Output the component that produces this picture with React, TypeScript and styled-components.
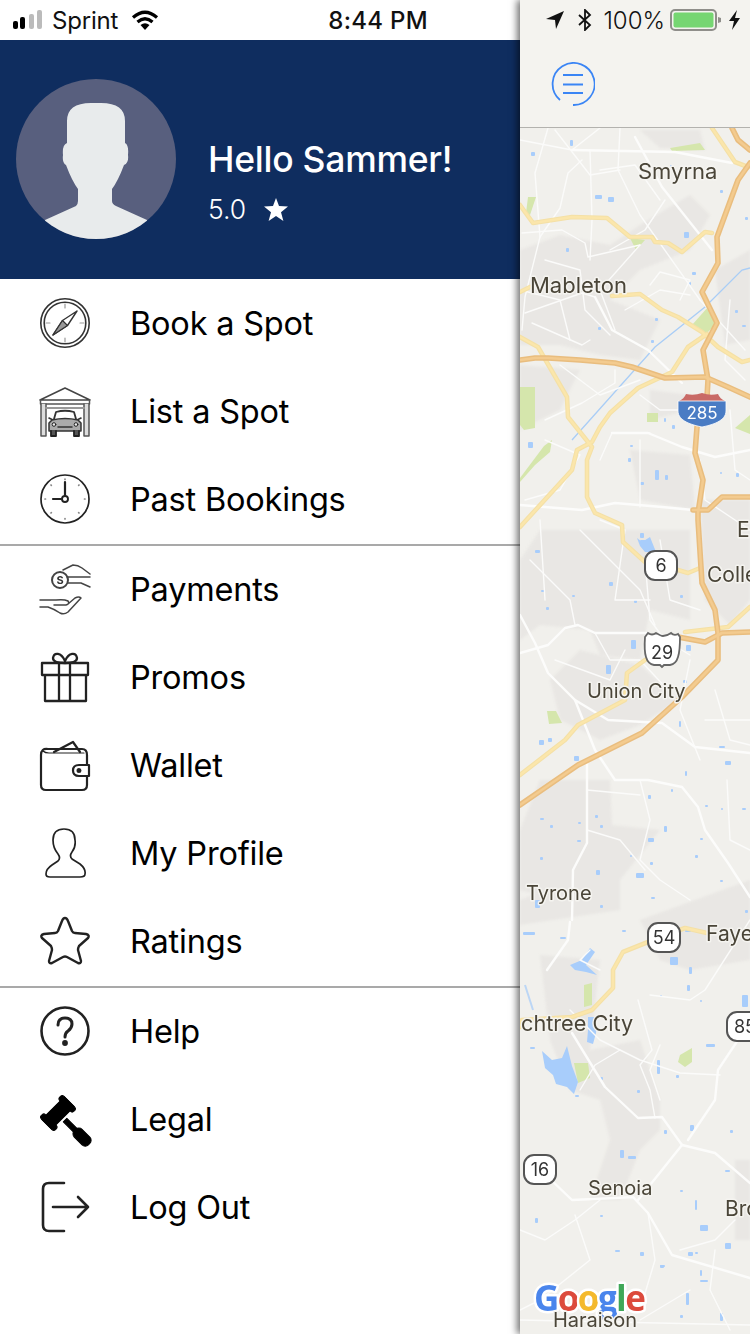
import React from "react";
import styled, { createGlobalStyle } from "styled-components";

const Global = createGlobalStyle`
  html, body { margin: 0; padding: 0; background: #fff; }
  body { font-family: Inter, "Liberation Sans", sans-serif; }
`;
const Screen = styled.div`
  width: 750px; height: 1334px; display: flex; overflow: hidden; position: relative; color: #000;
`;
const Drawer = styled.aside`
  width: 520px; flex: none; display: flex; flex-direction: column; background: #fff;
`;
const StatusBar = styled.div`
  height: 40px; flex: none; display: flex; align-items: center; font-size: 24px; color: #111;
`;
const DrawerStatus = styled(StatusBar)`
  padding-left: 13px;
`;
const Carrier = styled.span`
  margin-left: 6px; width: 65px; letter-spacing: -0.2px;
`;
const Clock = styled.span`
  font-weight: 500; margin-left: auto; margin-right: 92px; letter-spacing: 0.3px;
`;
const Header = styled.header`
  height: 239px; flex: none; background: #0f2d5f; display: flex; align-items: flex-start; padding: 39px 0 0 16px; box-sizing: border-box; color: #fff;
`;
const Avatar = styled.svg`
  width: 160px; height: 160px; flex: none;
`;
const Greeting = styled.div`
  margin: 60px 0 0 32px; display: flex; flex-direction: column; gap: 12px;
`;
const Name = styled.div`
  font-size: 35.5px; font-weight: 500; line-height: 42px; letter-spacing: -0.25px;
`;
const RatingRow = styled.div`
  display: flex; align-items: center; gap: 18px; font-size: 26.5px; line-height: 32px; font-weight: 300;
`;
const Row = styled.div`
  height: 88px; display: flex; align-items: center; padding-left: 40px; gap: 41px; font-size: 32.5px; letter-spacing: -0.2px;
  & > span { margin-left: -1px; }
`;
const IconBox = styled.svg<{ $w?: number }>`
  width: 50px; height: 50px; flex: none; overflow: visible; fill: none; stroke: #222; stroke-width: ${(p) => p.$w ?? 2}; stroke-linecap: round; stroke-linejoin: round; filter: blur(0.35px);
`;
const Divider = styled.hr`
  margin: 1px 0 -1px; border: 0; height: 2px; background: #a9a9a9; flex: none;
`;
const MapPanel = styled.main`
  flex: 1; display: flex; flex-direction: column; position: relative; z-index: 1; box-shadow: -3px 0 7px rgba(0,0,0,.55); background: #f4f3ef;
`;
const PanelStatus = styled(StatusBar)`
  justify-content: flex-end; padding-right: 9px; color: #111;
`;
const Percent = styled.span`
  margin: 0 5px 0 10px; font-weight: 300;
`;
const Toolbar = styled.div`
  height: 88px; flex: none; display: flex; align-items: center; padding-left: 31px; border-bottom: 1px solid #b3b2ae; box-sizing: border-box;
`;
const MapCanvas = styled.svg`
  display: block; width: 230px; height: 1206px; flex: none; background: #f1f0ec; filter: blur(0.45px);
`;
const Blocks = styled.g`
  filter: blur(1.2px);
`;
const CityLabel = styled.text<{ $s?: number }>`
  font-family: Inter, sans-serif; font-size: ${(p) => p.$s ?? 21}px; fill: #4a4538; stroke: #f5f4f0; stroke-width: 3px; paint-order: stroke; stroke-linejoin: round;
`;
const ShieldLabel = styled.text`
  font-family: Inter, sans-serif; font-size: 18px; fill: #333; text-anchor: middle;
`;
const LogoLabel = styled.text`
  font-family: "Open Sans", sans-serif; font-size: 35px; font-weight: 700; stroke: #fff; stroke-width: 5px; paint-order: stroke; stroke-linejoin: round; letter-spacing: -1.6px;
`;

const orange = [
  "520,360 535,358 548,358 580,360 615,363 632,367 665,378 705,377 728,387 750,397",
  "732,128 738,140 750,150",
  "750,163 738,180 717,237 718,263 702,292 717,323 703,350 708,380 707,397 697,427 695,453 703,480 698,513 698,520 702,583 715,610 718,633 718,660 682,697 642,733 578,765 520,805",
  "693,510 708,510 722,497 750,497",
  "678,637 705,642 722,633 750,632",
];
const yellow = [
  "520,205 533,223 572,217 607,218 630,237 652,237 655,242 668,243 682,252 705,232 712,233",
  "712,128 735,162 748,167",
  "520,292 530,287",
  "612,296 640,294 662,310 678,317 702,332 718,347 742,362 750,360",
  "520,337 538,347 567,397 568,417 592,447 587,460 587,497 595,513 622,525 623,542 645,562 678,570 688,573 700,568",
  "520,527 572,470 577,450 592,442 600,427 610,413 638,388 672,372 688,347 707,334",
  "520,775 565,740 578,725 625,700 627,673 645,660",
  "685,632 728,627 750,607",
  "520,1027 522,1020 572,1017 592,1010 613,988 613,970 623,952 648,942 685,928 707,933",
];
const whiteMajor = [
  "520,653 548,645 565,628 578,625 595,633 648,633",
  "520,615 535,643 548,673 575,700 595,750 615,780 648,780 682,787 698,807 705,830 728,863 750,897",
  "575,700 608,720 662,723 695,747 750,753",
  "587,760 587,843 573,870 572,920",
  "548,1177 572,1200 615,1198 633,1197 648,1213 672,1255 750,1278",
  "638,1200 682,1145 715,1153 750,1183",
  "682,1145 662,1117 638,1118 605,1087 572,1033",
  "688,1140 715,1100 718,1070 738,1040",
  "572,150 675,152 732,163",
  "635,137 662,187 712,250",
  "547,970 568,940 570,922",
  "595,297 612,330 648,350 682,383",
  "520,505 582,510 615,503 662,507 693,510",
  "612,433 648,433 682,447 715,457 750,450",
];
const whiteMinor = [
  "548,128 535,173 540,237 525,297 522,330",
  "582,160 568,173 560,208 540,237",
  "522,233 562,230 585,243 588,257 640,245",
  "525,313 582,293 595,297",
  "532,323 582,345 590,340",
  "615,370 615,383 582,403 545,420",
  "640,245 600,290 615,330",
  "520,140 572,150 600,128",
  "620,128 618,170 640,215 700,300",
  "610,250 645,230 665,200",
  "650,285 660,272 690,280 680,300",
  "700,300 745,350",
  "730,300 725,360 745,380",
  "600,460 612,433 650,433",
  "640,507 640,440",
  "700,460 705,500 735,520 750,530",
  "645,560 650,620 665,640 690,655",
  "580,530 610,560 640,590 655,625",
  "530,560 570,600 575,625",
  "595,633 610,660 640,660 668,690",
  "690,660 680,710 700,760",
  "640,780 650,820 640,860 660,880 690,900",
  "587,790 640,795",
  "587,830 620,840 645,870",
  "705,720 750,720",
  "727,780 730,840 750,850",
  "590,950 580,960 600,970",
  "570,1010 600,1040 640,1060 680,1073 720,1075",
  "638,1000 652,1050 640,1065 650,1090 655,1118",
  "620,1050 595,1065 580,1090",
  "650,995 690,1000 705,990 750,920",
  "660,1045 650,1070 660,1100",
  "520,1230 545,1240 575,1220 600,1200",
  "575,1215 590,1260 540,1300 520,1310",
  "648,1213 655,1260 640,1310",
  "715,1250 710,1290 730,1330",
  "520,1320 750,1325",
  "690,1290 640,1320",
  "735,1220 715,1240 680,1250",
  "555,130 590,175 620,170",
  "590,150 592,220 590,260",
  "600,170 635,165 660,200",
  "545,260 580,270 585,310 610,335",
  "520,290 560,300 570,340",
  "560,365 600,395 640,380",
  "545,440 580,455 560,490 525,500",
  "625,310 660,290 690,295",
  "640,395 660,410 695,410",
  "730,410 735,470 750,480",
  "540,520 545,600",
  "600,520 625,530 615,600 650,600",
  "660,540 670,600 700,610",
  "555,660 610,680 625,650",
  "715,690 730,740 750,745",
];
const blocks = [
  "520,250 560,235 610,245 640,225 690,195 710,215 690,250 640,270 610,300 660,320 640,360 600,355 560,345 520,345",
  "640,130 700,130 705,150 660,148",
  "520,365 580,370 560,410 520,430",
  "650,390 690,395 690,410 650,420",
  "630,450 690,455 695,510 640,500",
  "715,270 750,250 750,340 725,345",
  "540,530 690,530 690,620 650,610 640,660 600,655 590,630 540,625 520,640 520,560",
  "580,650 640,665 680,700 640,725 600,740 560,720 550,680",
  "700,500 750,500 750,600 730,625 705,600",
  "540,780 610,780 612,825 660,830 620,880 560,900 520,890 520,830",
  "620,860 520,900 520,925 620,910",
  "640,920 750,880 750,960 690,970 660,960",
  "540,955 600,960 590,1050 640,1040 660,1100 660,1130 640,1150 620,1200 590,1200 610,1140 600,1100 570,1090 550,1040",
  "735,1160 750,1160 750,1240 735,1240",
];
const specks: [number, number, number, number][] = [
  [531,152,4,4],[570,140,3,6],[595,195,7,4],[608,197,6,5],[684,232,5,6],[566,248,3,4],[692,272,4,3],[688,282,3,3],[655,318,3,3],[598,327,3,3],[651,340,3,3],[670,165,2,2],[720,190,3,3],[745,217,3,3],[735,310,3,3],[742,325,4,2],
  [528,442,5,6],[630,445,3,2],[628,458,3,4],[655,470,4,10],[665,475,3,5],[640,482,4,3],[664,418,2,4],[672,425,3,4],[736,473,3,4],[720,472,2,2],[640,533,4,5],[535,550,5,3],[640,540,6,3],[609,582,4,4],[541,590,4,2],[572,595,3,2],[546,607,3,3],[634,600,3,3],[680,595,3,3],
  [631,640,5,9],[606,665,5,9],[686,645,5,6],[683,680,4,3],[679,721,2,6],[539,740,5,5],[548,738,4,4],[574,756,5,5],[719,746,6,2],[725,761,6,4],[685,771,2,5],[671,789,2,3],[648,795,3,4],[705,805,3,2],[742,808,4,2],[721,808,2,2],[595,815,3,3],[578,822,3,2],[540,818,4,2],[550,825,3,3],[577,840,4,2],[600,825,3,3],[664,826,3,6],[648,838,6,4],[700,838,3,2],[540,857,3,3],[596,870,4,5],[636,873,8,5],[650,862,3,3],[695,855,3,3],[630,855,2,2],[651,897,4,2],[720,880,3,2],[535,900,5,8],[600,905,3,3],[745,910,3,3],
  [523,932,12,3],[560,937,6,2],[622,930,4,2],[685,930,6,2],[670,957,8,8],[689,967,3,7],[687,985,3,6],[660,995,2,2],[742,995,6,12],[700,1000,2,2],[530,1047,5,2],[706,1044,9,3],[600,1077,3,3],[657,1060,3,14],[676,1075,3,3],[637,1090,3,3],[575,1095,4,2],[690,1125,4,6],[664,1130,3,4],[620,1150,4,8],[628,1156,8,3],[730,1130,3,3],[725,1170,5,2],[695,1200,2,10],[680,1190,3,2],[700,1225,8,6],[600,1215,3,2],[535,1218,3,5],[640,1252,4,4],[688,1252,5,4],[660,1265,4,3],[695,1252,3,2],[725,1243,6,6],[615,1250,5,2],[660,1265,5,2],[700,1270,2,6],[686,1293,3,12],[700,1280,8,2],[720,1313,3,8],[680,1315,3,3],
];

const Road = ({ d, w, c }: { d: string; w: number; c: string }) => (
  <polyline points={d} fill="none" stroke={c} strokeWidth={w} strokeLinejoin="round" strokeLinecap="round" />
);

const Shield = ({ x, y, w, t }: { x: number; y: number; w: number; t: string }) => (
  <g>
    <rect x={x} y={y} width={w} height={29} rx={10} fill="#fff" stroke="#555" strokeWidth={2} />
    <ShieldLabel x={x + w / 2} y={y + 21}>{t}</ShieldLabel>
  </g>
);

const MapArt = () => (
  <MapCanvas viewBox="520 128 230 1206">
    <Blocks>{blocks.map((p, i) => <polygon key={i} points={p} fill="#e9e7e4" />)}</Blocks>
    <g fill="#d5e6ac">
      <polygon points="528,197 536,197 530,215 526,213" />
      <polygon points="520,387 535,387 535,428 524,430 520,425" />
      <polygon points="692,325 708,307 715,325 706,334" />
      <rect x="647" y="413" width="11" height="9" />
      <polygon points="735,428 750,415 750,434" />
      <polygon points="670,148 700,143 705,150 672,151" />
      <polygon points="630,238 645,240 636,250" />
      <polygon points="547,711 556,711 562,723 549,724" />
      <polygon points="574,1063 588,1063 590,1078 578,1083" />
      <polygon points="680,1055 692,1048 692,1062 685,1067 678,1062" />
      <polygon points="584,985 592,983 592,1005 584,1007" />
      <polygon points="520,478 544,446 552,440 550,452 535,465 520,482" />
    </g>
    <path d="M572 440 L655 347 L705 307 L742 270 L750 268" fill="none" stroke="#a9cdf6" strokeWidth="1.3" />
    <path d="M525 985 L533 1010" fill="none" stroke="#bcd6f5" strokeWidth="2" />
    <g fill="#a8cdfb">
      <polygon points="542,1051 552,1060 562,1058 567,1046 572,1066 578,1082 574,1094 567,1087 556,1084 553,1075 545,1068" />
      <polygon points="588,1017 597,1017 596,1033 593,1044 587,1042 588,1030" />
      <polygon points="637,538 642,542 650,537 656,552 645,552 640,546" />
      <polygon points="570,965 582,960 590,948 595,952 586,965 597,975 586,972 575,970" />
    </g>
    {specks.map(([x, y, w, h], i) => <rect key={i} x={x} y={y} width={w} height={h} rx={1} fill="#a8cdfb" />)}
    {whiteMinor.map((d, i) => <Road key={i} d={d} w={1.4} c="#fbfbfa" />)}
    {whiteMajor.map((d, i) => <Road key={i} d={d} w={2.4} c="#fcfcfb" />)}
    {yellow.map((d, i) => <Road key={i} d={d} w={4.6} c="#f4e0a6" />)}
    {yellow.map((d, i) => <Road key={i} d={d} w={2.4} c="#fbe6ab" />)}
    {orange.map((d, i) => <Road key={i} d={d} w={5.6} c="#e9bd7e" />)}
    {orange.map((d, i) => <Road key={i} d={d} w={2.6} c="#f3cb8f" />)}
    <g>
      <path d="M679 401 q5 -2 7 -7 q8 2 16 -1 q8 3 16 1 q2 5 7 7 Z" fill="#c96a66" />
      <path d="M678 401 H726 V411 C726 421 712 425 702 427 C692 425 678 421 678 411 Z" fill="#4a7cc4" stroke="#fff" strokeWidth="0.8" />
      <text x="702" y="419" textAnchor="middle" fontFamily="Inter, sans-serif" fontSize="17" fill="#fff">285</text>
    </g>
    <Shield x={645} y={551} w={32} t="6" />
    <path d="M648 633 q4 3 8 0 q5 3 7 3 q4 0 8 -3 q3 3 7 1 l2 3 q0 14 -2 20 q-2 7 -8 8 h-6 l-2 2 l-2 -2 h-6 q-6 -1 -8 -8 q-2 -6 -1 -20 Z" fill="#fff" stroke="#666" strokeWidth="1.8" />
    <ShieldLabel x={662} y={659}>29</ShieldLabel>
    <Shield x={648} y={923} w={32} t="54" />
    <Shield x={727} y={1012} w={36} t="85" />
    <Shield x={524} y={1155} w={32} t="16" />
    <CityLabel $s={22} x={638} y={179}>Smyrna</CityLabel>
    <CityLabel $s={22} x={530} y={293}>Mableton</CityLabel>
    <CityLabel x={707} y={582}>Colle</CityLabel>
    <CityLabel x={737} y={537}>E</CityLabel>
    <CityLabel $s={20} x={587} y={698}>Union City</CityLabel>
    <CityLabel $s={20} x={526} y={900}>Tyrone</CityLabel>
    <CityLabel x={706} y={941}>Faye</CityLabel>
    <CityLabel $s={21.7} x={521} y={1031}>chtree City</CityLabel>
    <CityLabel $s={20} x={588} y={1195}>Senoia</CityLabel>
    <CityLabel x={725} y={1216}>Bro</CityLabel>
    <LogoLabel x={534} y={1311}>
      <tspan fill="#4a85ec">G</tspan><tspan fill="#dc4a3c">o</tspan><tspan fill="#f4b92c">o</tspan><tspan fill="#4a85ec">g</tspan><tspan fill="#3fa757">l</tspan><tspan fill="#dc4a3c">e</tspan>
    </LogoLabel>
    <CityLabel $s={20} x={553} y={1327}>Haraison</CityLabel>
  </MapCanvas>
);

const Compass = () => (
  <IconBox viewBox="0 0 50 50">
    <g strokeWidth="1.6" stroke="#333">
      <circle cx="25" cy="25" r="24.2" />
      <circle cx="25" cy="25" r="20.8" />
    </g>
    <g strokeWidth="1.2" stroke="#999">
      <path d="M25 6v4M25 40v4M6 25h4M40 25h4" />
    </g>
    <path d="M37 13 L27.5 27.5 L13 37 L22.5 22.5 Z" strokeWidth="1.4" stroke="#333" />
    <path d="M22.5 22.5 L27.5 27.5 L13 37 Z" strokeWidth="1.2" fill="#999" stroke="#333" />
  </IconBox>
);
const Garage = () => (
  <IconBox viewBox="0 0 50 50" $w={1.5}>
    <path d="M0 14 L25 2 L50 14 Z" stroke="#444" />
    <path d="M0.5 14 V18 H49.5 V14" stroke="#555" />
    <path d="M1 18 V50 H6 V18 M44 18 V50 H49 V18" stroke="#555" fill="#ddd" />
    <path d="M6 22 H44" stroke="#999" strokeWidth="2" />
    <path d="M14 33 L16 26 Q25 23.5 34 26 L36 33" strokeWidth="1.8" stroke="#333" />
    <path d="M9 32 L13 34 M41 32 L37 34" strokeWidth="1.6" stroke="#333" />
    <path d="M12 34 Q25 31 38 34 L41 37 V45 H9 V37 Z" fill="#aaa" stroke="#333" />
    <path d="M11 45 V50 H16 V45 M34 45 V50 H39 V45" strokeWidth="1.8" fill="#555" />
    <path d="M18 41 H32" stroke="#333" />
    <circle cx="14" cy="38.5" r="1.8" fill="#eee" strokeWidth="1" />
    <circle cx="36" cy="38.5" r="1.8" fill="#eee" strokeWidth="1" />
  </IconBox>
);
const ClockIcon = () => (
  <IconBox viewBox="0 0 50 50">
    <circle cx="25" cy="25" r="24" strokeWidth="1.7" />
    <path d="M25 21 V8 M21 25 H13" strokeWidth="2.2" />
    <circle cx="25" cy="25" r="3" strokeWidth="1.9" />
    <g stroke="#888" strokeWidth="1.7">
      <path d="M25 5v.5M25 44.5v.5M5 25h.5M44.5 25h.5M11 11l.3.3M39 11l-.3.3M11 39l.3-.3M39 39l-.3-.3" />
    </g>
  </IconBox>
);
const PaymentsIcon = () => (
  <IconBox viewBox="0 0 50 50" $w={1.5}>
    <circle cx="20" cy="16" r="8" strokeWidth="2" stroke="#444" />
    <text x="20" y="20" textAnchor="middle" fontFamily="Inter, sans-serif" fontSize="11" fontWeight="700" fill="#333" stroke="none">S</text>
    <path d="M23 6 L33 1 Q38 1 42 4 L50 10 M27 13 H50 M28 19 H41 L50 23" stroke="#444" />
    <path d="M0 36 H16 Q24 35 28 37 Q30 40 26 41 L14 41 M0 43 H8 Q14 45 20 49 Q24 51 28 48 L41 34 Q39 32 35 34 L28 40" stroke="#444" />
  </IconBox>
);
const Gift = () => (
  <IconBox viewBox="0 0 50 50" $w={2.3}>
    <path d="M2 11 H48 V23 H2 Z M5 23 V49 H46 V23 M19 11 V49 M30 11 V49" />
    <path d="M25 11 C17 11 13 9 13 6 C14 0 21 0 25 9 C29 0 36 0 37 6 C37 9 33 11 25 11 Z" />
  </IconBox>
);
const Wallet = () => (
  <IconBox viewBox="0 0 50 50" $w={2.2}>
    <path d="M14 12 L33 2 L40 12" />
    <path d="M1 15 Q1 8 8 9 H42 Q47 9 47 15 V25 M47 36 V45 Q47 50 42 50 H6 Q1 50 1 45 V15" />
    <path d="M3 11 Q5 13 9 13 H44" strokeWidth="1.2" />
    <path d="M49 25 H39 Q33 25 33 30.5 Q33 36 39 36 H49 Z" />
    <circle cx="39" cy="30.5" r="1.4" fill="#222" />
  </IconBox>
);
const ProfileIcon = () => (
  <IconBox viewBox="0 0 50 50" $w={1.7}>
    <path d="M13 12 Q13 1 24 1 Q35 1 35 12 Q36 19 32 24 Q29 28 32 31 L40 36 Q46 41 45 46 Q45 49 40 49 H10 Q6 49 6 46 Q6 41 12 37 L18 33 Q21 30 18 26 Q13 20 13 12 Z" />
  </IconBox>
);
const StarIcon = () => (
  <IconBox viewBox="0 0 50 50" $w={2.4}>
    <path d="M25 2 Q27 2 28 5 L32 15 Q33 17 35 17 L46 18 Q50 19 48 22 L39 30 Q38 32 38 34 L41 45 Q41 48 38 47 L27 41 Q25 40 23 41 L12 47 Q9 48 9 45 L12 34 Q12 32 11 30 L2 22 Q0 19 4 18 L15 17 Q17 17 18 15 L22 5 Q23 2 25 2 Z" />
  </IconBox>
);
const HelpIcon = () => (
  <IconBox viewBox="0 0 50 50" $w={2.6}>
    <circle cx="25" cy="25" r="23.5" />
    <path d="M18 19 Q18 12 25 12 Q32 12 32 18 Q32 22 28 25 Q25 27 25 31" strokeWidth="3" />
    <circle cx="25" cy="37" r="1.6" fill="#222" />
  </IconBox>
);
const Gavel = () => (
  <IconBox viewBox="0 0 50 50">
    <g fill="#000" stroke="#000" strokeWidth="1" transform="rotate(45 18 19)">
      <rect x="11" y="3" width="14" height="32" />
      <rect x="8" y="3" width="20" height="6" rx="2.5" />
      <rect x="8" y="29" width="20" height="6" rx="2.5" />
      <rect x="28" y="16.5" width="16" height="5" />
      <rect x="42" y="13.5" width="20" height="11" rx="4.5" />
    </g>
  </IconBox>
);
const LogOut = () => (
  <IconBox viewBox="0 0 50 50" $w={2.6}>
    <path d="M24 1 H9 Q3 1 3 7 V43 Q3 49 9 49 H24" />
    <path d="M13 25 H48 M38 15 L48 25 L38 35" />
  </IconBox>
);

const Item = ({ icon, label }: { icon: React.ReactNode; label: string }) => (
  <Row>{icon}<span>{label}</span></Row>
);

export default function App() {
  return (
    <Screen>
      <Global />
      <Drawer>
        <DrawerStatus>
          <svg width="33" height="20" viewBox="0 0 33 20">
            <rect x="0" y="11" width="5" height="8" rx="2" fill="#000" />
            <rect x="7" y="7" width="5" height="12" rx="2" fill="#000" />
            <rect x="16" y="4" width="5" height="15" rx="2" fill="#bbb" />
            <rect x="24" y="0" width="5" height="19" rx="2" fill="#bbb" />
          </svg>
          <Carrier>Sprint</Carrier>
          <svg width="30" height="22" viewBox="0 0 30 22" style={{ marginLeft: 13 }}>
            <path d="M15 21 L10.5 16 Q15 12.5 19.5 16 Z" fill="#000" />
            <path d="M7.5 13 Q15 6.5 22.5 13" fill="none" stroke="#000" strokeWidth="3.2" />
            <path d="M3 8.5 Q15 -2 27 8.5" fill="none" stroke="#000" strokeWidth="3.2" />
          </svg>
          <Clock>8:44 PM</Clock>
        </DrawerStatus>
        <Header>
          <Avatar viewBox="0 0 160 160">
            <defs><clipPath id="av"><circle cx="80" cy="80" r="80" /></clipPath></defs>
            <circle cx="80" cy="80" r="80" fill="#585f7e" />
            <path clipPath="url(#av)" d="M51 64 V42 Q51 24 75 24 H85 Q109 24 109 42 V64 Q113 66 112 76 Q113 84 108 86 Q102 102 96 110 V122 Q96 125 100 127 L131 141 V170 H29 V141 L60 127 Q62 125 62 122 V110 Q56 102 50 86 Q46 84 47 76 Q46 66 51 64 Z" fill="#e8ebec" />
          </Avatar>
          <Greeting>
            <Name>Hello Sammer!</Name>
            <RatingRow>
              <span>5.0</span>
              <svg width="24" height="23" viewBox="0 0 24 23"><path d="M12 0 L15 8 L24 8.6 L17 14.2 L19.4 23 L12 18 L4.6 23 L7 14.2 L0 8.6 L9 8 Z" fill="#fff" /></svg>
            </RatingRow>
          </Greeting>
        </Header>
        <Item icon={<Compass />} label="Book a Spot" />
        <Item icon={<Garage />} label="List a Spot" />
        <Item icon={<ClockIcon />} label="Past Bookings" />
        <Divider />
        <Item icon={<PaymentsIcon />} label="Payments" />
        <Item icon={<Gift />} label="Promos" />
        <Item icon={<Wallet />} label="Wallet" />
        <Item icon={<ProfileIcon />} label="My Profile" />
        <Item icon={<StarIcon />} label="Ratings" />
        <Divider />
        <Item icon={<HelpIcon />} label="Help" />
        <Item icon={<Gavel />} label="Legal" />
        <Item icon={<LogOut />} label="Log Out" />
      </Drawer>
      <MapPanel>
        <PanelStatus>
          <svg width="20" height="20" viewBox="0 0 20 20"><path d="M19 1 L1 9 L10 10 L11 19 Z" fill="#111" /></svg>
          <svg width="16" height="22" viewBox="0 0 16 22" style={{ marginLeft: 12 }}><path d="M2 6 L13 16 L8 21 V1 L13 6 L2 16" fill="none" stroke="#111" strokeWidth="1.8" /></svg>
          <Percent>100%</Percent>
          <svg width="53" height="22" viewBox="0 0 53 22">
            <rect x="1" y="1" width="45" height="20" rx="4" fill="none" stroke="#8f8e8a" strokeWidth="2" />
            <rect x="3.5" y="3.5" width="40" height="15" rx="2" fill="#76d672" />
            <path d="M48 8 L51 9 V13 L48 14 Z" fill="#8f8e8a" />
          </svg>
          <svg width="13" height="20" viewBox="0 0 13 20" style={{ marginLeft: 5 }}><path d="M9 0 L1 11 H6 L4 20 L12 8 H7 Z" fill="#111" /></svg>
        </PanelStatus>
        <Toolbar>
          <svg width="44" height="44" viewBox="0 0 44 44" fill="none" stroke="#3a85f5" strokeWidth="1.8">
            <path d="M9 38 A21 21 0 1 1 22 43" />
            <path d="M12 13 H32 M12 22.5 H32 M12 31 H32" />
          </svg>
        </Toolbar>
        <MapArt />
      </MapPanel>
    </Screen>
  );
}
